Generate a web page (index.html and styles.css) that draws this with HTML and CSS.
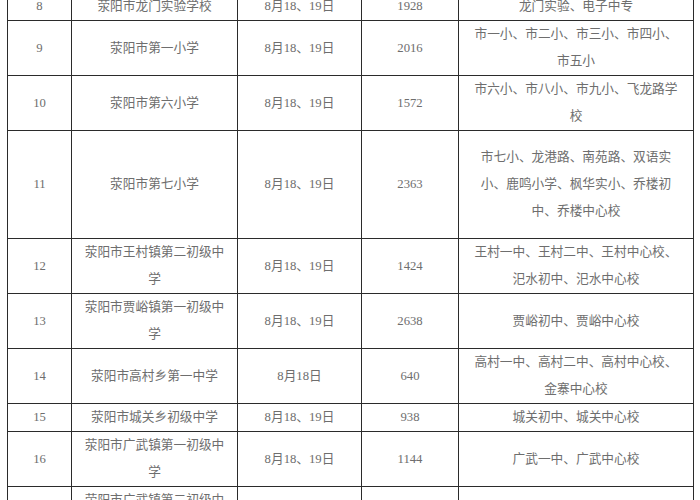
FILE: index.html
```html
<!DOCTYPE html>
<html lang="zh-CN">
<head>
<meta charset="utf-8">
<title>荥阳市考点安排</title>
<link rel="stylesheet" href="styles.css">
</head>
<body>
<div class="page">
<table class="sched">
<colgroup>
<col class="c-no"><col class="c-name"><col class="c-date"><col class="c-num"><col class="c-src">
</colgroup>
<tbody>
<tr><td>8</td><td>荥阳市龙门实验学校</td><td>8月18、19日</td><td>1928</td><td>龙门实验、电子中专</td></tr>
<tr><td>9</td><td>荥阳市第一小学</td><td>8月18、19日</td><td>2016</td><td>市一小、市二小、市三小、市四小、市五小</td></tr>
<tr><td>10</td><td>荥阳市第六小学</td><td>8月18、19日</td><td>1572</td><td>市六小、市八小、市九小、飞龙路学校</td></tr>
<tr class="tall"><td>11</td><td>荥阳市第七小学</td><td>8月18、19日</td><td>2363</td><td>市七小、龙港路、南苑路、双语实小、鹿鸣小学、枫华实小、乔楼初中、乔楼中心校</td></tr>
<tr><td>12</td><td>荥阳市王村镇第二初级中学</td><td>8月18、19日</td><td>1424</td><td>王村一中、王村二中、王村中心校、汜水初中、汜水中心校</td></tr>
<tr><td>13</td><td>荥阳市贾峪镇第一初级中学</td><td>8月18、19日</td><td>2638</td><td>贾峪初中、贾峪中心校</td></tr>
<tr><td>14</td><td>荥阳市高村乡第一中学</td><td>8月18日</td><td>640</td><td>高村一中、高村二中、高村中心校、金寨中心校</td></tr>
<tr><td>15</td><td>荥阳市城关乡初级中学</td><td>8月18、19日</td><td>938</td><td>城关初中、城关中心校</td></tr>
<tr><td>16</td><td>荥阳市广武镇第一初级中学</td><td>8月18、19日</td><td>1144</td><td>广武一中、广武中心校</td></tr>
<tr><td>17</td><td>荥阳市广武镇第二初级中学</td><td>8月18、19日</td><td>1206</td><td>广武二中、广武中心校</td></tr>
</tbody>
</table>
</div>
</body>
</html>
```
FILE: styles.css
```css
html, body {
  margin: 0;
  padding: 0;
  background: #ffffff;
}
.page {
  padding-left: 7px;
  height: 500px;
  overflow: hidden;
}
.sched {
  margin-top: -8px;
  border-collapse: collapse;
  table-layout: fixed;
  width: 687px;
  font-family: "Liberation Serif", "Noto Sans CJK SC", serif;
  font-size: 12.7px;
  line-height: 27px;
  color: #6e6e6e;
}
.c-no { width: 64px; }
.c-name { width: 166px; }
.c-date { width: 124px; }
.c-num { width: 97px; }
.c-src { width: 235px; }
.sched td {
  border: 1px solid #2b2b2b;
  padding: 0 10px;
  text-align: center;
  vertical-align: middle;
}
.sched tr.tall {
  height: 108px;
}
```
